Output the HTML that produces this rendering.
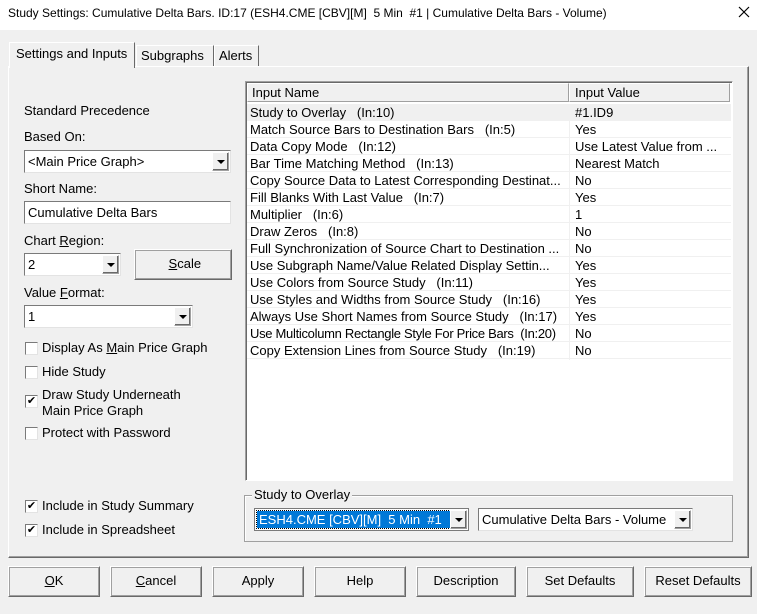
<!DOCTYPE html>
<html><head><style>
*{box-sizing:border-box;margin:0;padding:0}
body{width:757px;height:614px;background:#f0f0f0;font-family:"Liberation Sans",sans-serif;font-size:13px;color:#000;position:relative;overflow:hidden}
.a{position:absolute;white-space:nowrap}
.title{left:0;top:0;width:757px;height:30px;background:#fff}
.inp{position:absolute;background:#fff;border:1px solid #7a7a7a;border-right-color:#e3e3e3;border-bottom-color:#e3e3e3;height:23px;padding:2px 3px;line-height:17px;white-space:nowrap}
.dd{position:absolute;right:1px;top:1px;width:17px;height:19px;background:#f0f0f0;border:1px solid #a0a0a0;border-left-color:#fff;border-top-color:#fff;box-shadow:inset -1px -1px #696969}
.dd:after{content:"";position:absolute;left:4px;top:7px;border-left:4px solid transparent;border-right:4px solid transparent;border-top:4px solid #000}
.btn{position:absolute;height:31px;border:1px solid #fff;border-right-color:#696969;border-bottom-color:#696969;box-shadow:1px 1px #a0a0a0 inset,-1px -1px #a0a0a0 inset;text-align:center;line-height:28px;background:#f0f0f0}
.cb{position:absolute;width:13px;height:13px;background:#fff;border:1px solid #7a7a7a;border-right-color:#e3e3e3;border-bottom-color:#e3e3e3;font-size:11px;line-height:11px;text-align:center}
.row{position:absolute;left:247px;width:484px;height:17px;line-height:17px;border-bottom:1px solid #f0f0f0;white-space:nowrap}
.row span{position:absolute;left:3px;max-width:318px;overflow:hidden}
.row b{font-weight:normal;position:absolute;left:328px}
u{text-decoration:underline}
</style></head><body>
<div class="a title"></div>
<div class="a" style="left:8px;top:6px;font-size:12px">Study Settings: Cumulative Delta Bars. ID:17 (ESH4.CME [CBV][M]&nbsp; 5 Min&nbsp; #1 | Cumulative Delta Bars - Volume)</div>
<svg class="a" style="left:738px;top:6px" width="12" height="12"><path d="M1 1L11 11M11 1L1 11" stroke="#000" stroke-width="1.2"/></svg>

<div class="a" style="left:8px;top:66px;width:741px;height:492px;border:1px solid #fff;border-right-color:#696969;border-bottom-color:#696969;box-shadow:inset -1px -1px #a0a0a0"></div>
<div class="a" style="left:9px;top:42px;width:126px;height:26px;background:#f0f0f0;border:1px solid #fff;border-right:1px solid #696969;border-bottom:none;padding:3px 6px">Settings and Inputs</div>
<div class="a" style="left:136px;top:45px;width:78px;height:21px;border:1px solid #fff;border-right:1px solid #696969;border-bottom:none;padding:2px 4px">Subgraphs</div>
<div class="a" style="left:214px;top:45px;width:45px;height:21px;border:1px solid #fff;border-right:1px solid #696969;border-bottom:none;padding:2px 4px">Alerts</div>

<div class="a" style="left:24px;top:103px">Standard Precedence</div>
<div class="a" style="left:24px;top:129px">Based On:</div>
<div class="inp" style="left:24px;top:150px;width:207px">&lt;Main Price Graph&gt;<div class="dd"></div></div>
<div class="a" style="left:24px;top:181px">Short Name:</div>
<div class="inp" style="left:24px;top:201px;width:207px">Cumulative Delta Bars</div>
<div class="a" style="left:24px;top:233px">Chart <u>R</u>egion:</div>
<div class="inp" style="left:24px;top:253px;width:97px">2<div class="dd"></div></div>
<div class="btn" style="left:134px;top:249px;width:98px">&nbsp;<u>S</u>cale</div>
<div class="a" style="left:24px;top:285px">Value <u>F</u>ormat:</div>
<div class="inp" style="left:24px;top:305px;width:169px">1<div class="dd"></div></div>
<div class="cb" style="left:25px;top:342px"></div><div class="a" style="left:42px;top:340px">Display As <u>M</u>ain Price Graph</div>
<div class="cb" style="left:25px;top:366px"></div><div class="a" style="left:42px;top:364px">Hide Study</div>
<div class="cb" style="left:25px;top:395px">✔</div><div class="a" style="left:42px;top:387px;line-height:16px">Draw Study Underneath<br>Main Price Graph</div>
<div class="cb" style="left:25px;top:427px"></div><div class="a" style="left:42px;top:425px">Protect with Password</div>
<div class="cb" style="left:25px;top:500px">✔</div><div class="a" style="left:42px;top:498px">Include in Study Summary</div>
<div class="cb" style="left:25px;top:524px">✔</div><div class="a" style="left:42px;top:522px">Include in Spreadsheet</div>

<div class="a" style="left:245px;top:81px;width:488px;height:400px;background:#fff;border:1px solid #a0a0a0;border-right-color:#fff;border-bottom-color:#fff;box-shadow:inset 1px 1px #696969"></div>
<div class="a" style="left:247px;top:83px;width:322px;height:19px;border:1px solid #fff;border-right-color:#a0a0a0;border-bottom-color:#a0a0a0;padding:1px 4px;background:#f0f0f0">Input Name</div>
<div class="a" style="left:569px;top:83px;width:161px;height:19px;border:1px solid #fff;border-right-color:#a0a0a0;border-bottom-color:#a0a0a0;padding:1px 5px;background:#f0f0f0">Input Value</div>
<div class="a" style="left:569px;top:104px;width:1px;height:256px;background:#f0f0f0"></div>
<div class="row" style="top:104px;background:#f0f0f0"><span>Study to Overlay&nbsp;&nbsp; (In:10)</span><b>#1.ID9</b></div>
<div class="row" style="top:121px"><span>Match Source Bars to Destination Bars&nbsp;&nbsp; (In:5)</span><b>Yes</b></div>
<div class="row" style="top:138px"><span>Data Copy Mode&nbsp;&nbsp; (In:12)</span><b>Use Latest Value from ...</b></div>
<div class="row" style="top:155px"><span>Bar Time Matching Method&nbsp;&nbsp; (In:13)</span><b>Nearest Match</b></div>
<div class="row" style="top:172px"><span>Copy Source Data to Latest Corresponding Destinat...</span><b>No</b></div>
<div class="row" style="top:189px"><span>Fill Blanks With Last Value&nbsp;&nbsp; (In:7)</span><b>Yes</b></div>
<div class="row" style="top:206px"><span>Multiplier&nbsp;&nbsp; (In:6)</span><b>1</b></div>
<div class="row" style="top:223px"><span>Draw Zeros&nbsp;&nbsp; (In:8)</span><b>No</b></div>
<div class="row" style="top:240px"><span>Full Synchronization of Source Chart to Destination ...</span><b>No</b></div>
<div class="row" style="top:257px"><span>Use Subgraph Name/Value Related Display Settin...</span><b>Yes</b></div>
<div class="row" style="top:274px"><span>Use Colors from Source Study&nbsp;&nbsp; (In:11)</span><b>Yes</b></div>
<div class="row" style="top:291px"><span>Use Styles and Widths from Source Study&nbsp;&nbsp; (In:16)</span><b>Yes</b></div>
<div class="row" style="top:308px"><span>Always Use Short Names from Source Study&nbsp;&nbsp; (In:17)</span><b>Yes</b></div>
<div class="row" style="top:325px"><span style="letter-spacing:-0.3px">Use Multicolumn Rectangle Style For Price Bars&nbsp; (In:20)</span><b>No</b></div>
<div class="row" style="top:342px"><span>Copy Extension Lines from Source Study&nbsp;&nbsp; (In:19)</span><b>No</b></div>

<div class="a" style="left:244px;top:495px;width:489px;height:47px;border:1px solid #a0a0a0;box-shadow:1px 1px #fff inset"></div>
<div class="a" style="left:252px;top:487px;background:#f0f0f0;padding:0 2px">Study to Overlay</div>
<div class="inp" style="left:254px;top:508px;width:215px;border-color:#7a7a7a"><span style="position:absolute;left:2px;top:2px;width:193px;height:17px;background:#0078d7;color:#fff;padding-left:2px;outline:1px dotted #000">ESH4.CME [CBV][M]&nbsp; 5 Min&nbsp; #1</span><div class="dd"></div></div>
<div class="inp" style="left:478px;top:508px;width:215px;overflow:hidden">Cumulative Delta Bars - Volume<div class="dd"></div></div>

<div class="btn" style="left:8px;top:566px;width:92px"><u>O</u>K</div>
<div class="btn" style="left:110px;top:566px;width:92px"><u>C</u>ancel</div>
<div class="btn" style="left:212px;top:566px;width:92px">Apply</div>
<div class="btn" style="left:314px;top:566px;width:92px">Help</div>
<div class="btn" style="left:416px;top:566px;width:100px">Description</div>
<div class="btn" style="left:526px;top:566px;width:108px">Set Defaults</div>
<div class="btn" style="left:644px;top:566px;width:108px">Reset Defaults</div>
</body></html>
